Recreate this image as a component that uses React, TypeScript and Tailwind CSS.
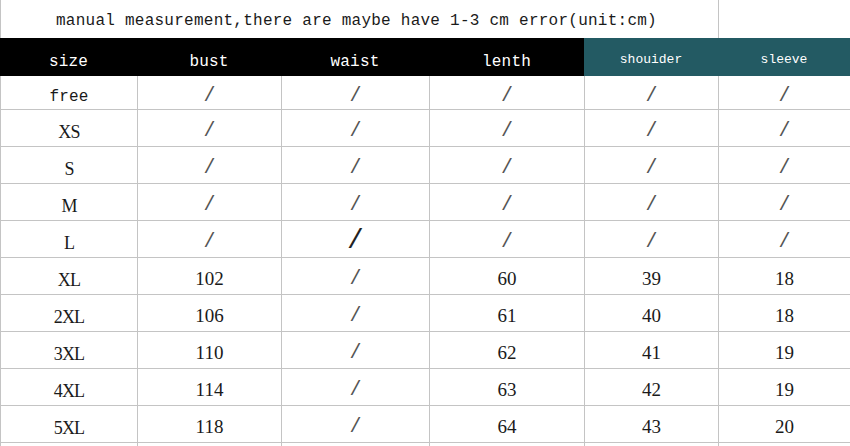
import React from "react";

const MONO = "font-['Liberation_Mono',monospace]";
const SERIF = "font-['Liberation_Serif',serif]";

const COLS = ["w-[137px]", "w-[144px]", "w-[148px]", "w-[155px]", "w-[134px]", "flex-1"];

const ROWS: string[][] = [
  ["free", "/", "/", "/", "/", "/"],
  ["XS", "/", "/", "/", "/", "/"],
  ["S", "/", "/", "/", "/", "/"],
  ["M", "/", "/", "/", "/", "/"],
  ["L", "/", "//", "/", "/", "/"],
  ["XL", "102", "/", "60", "39", "18"],
  ["2XL", "106", "/", "61", "40", "18"],
  ["3XL", "110", "/", "62", "41", "19"],
  ["4XL", "114", "/", "63", "42", "19"],
  ["5XL", "118", "/", "64", "43", "20"],
];

function Cell({ value, first }: { value: string; first: boolean }) {
  if (value === "/") {
    return <span className={`${MONO} text-[20px] text-[#555] pt-[6px]`}>/</span>;
  }
  if (value === "//") {
    return <span className={`${MONO} text-[28px] text-[#222] pt-[3px]`}>/</span>;
  }
  if (value === "free") {
    return <span className={`${MONO} text-[16px] tracking-[0.2px] text-[#1a1a1a] pt-[9px]`}>free</span>;
  }
  if (first) {
    return <span className={`${SERIF} text-[18px] tracking-[-0.8px] text-[#1a1a1a] pt-[8px]`}>{value}</span>;
  }
  return <span className={`${SERIF} text-[19px] text-[#1a1a1a] pt-[7px]`}>{value}</span>;
}

export default function App() {
  return (
    <div className="w-[850px] h-[446px] bg-white overflow-hidden">
      {/* title row */}
      <div className="flex h-[38px]">
        <div className="w-[718px] border-l border-[#c4c4c4] flex items-center pl-[55px] pt-[4px]">
          <span className={`${MONO} text-[16px] tracking-[0.25px] text-[#1a1a1a] whitespace-nowrap`}>
            manual measurement,there are maybe have 1-3 cm error(unit:cm)
          </span>
        </div>
        <div className="flex-1 border-l border-[#c4c4c4]" />
      </div>

      {/* header row */}
      <div className="flex h-[38px]">
        {["size", "bust", "waist", "lenth"].map((h, i) => (
          <div key={h} className={`${COLS[i]} bg-black flex items-center justify-center pt-[9px]`}>
            <span className={`${MONO} text-[16px] tracking-[0.2px] text-white`}>{h}</span>
          </div>
        ))}
        {["shouider", "sleeve"].map((h, i) => (
          <div key={h} className={`${COLS[i + 4]} bg-[#235a63] flex items-center justify-center pt-[5px]`}>
            <span className={`${MONO} text-[13px] text-white`}>{h}</span>
          </div>
        ))}
      </div>

      {/* data rows */}
      {ROWS.map((row, r) => (
        <div key={row[0]} className={`flex border-b border-[#c4c4c4] ${r === 0 ? "h-[34px]" : "h-[37px]"}`}>
          {row.map((v, c) => (
            <div
              key={c}
              className={`${COLS[c]} border-l border-[#c4c4c4] flex items-center justify-center`}
            >
              <Cell value={v} first={c === 0} />
            </div>
          ))}
        </div>
      ))}
      <div className="flex h-[4px]">
        {COLS.map((w, c) => (
          <div key={c} className={`${w} border-l border-[#c4c4c4]`} />
        ))}
      </div>
    </div>
  );
}
